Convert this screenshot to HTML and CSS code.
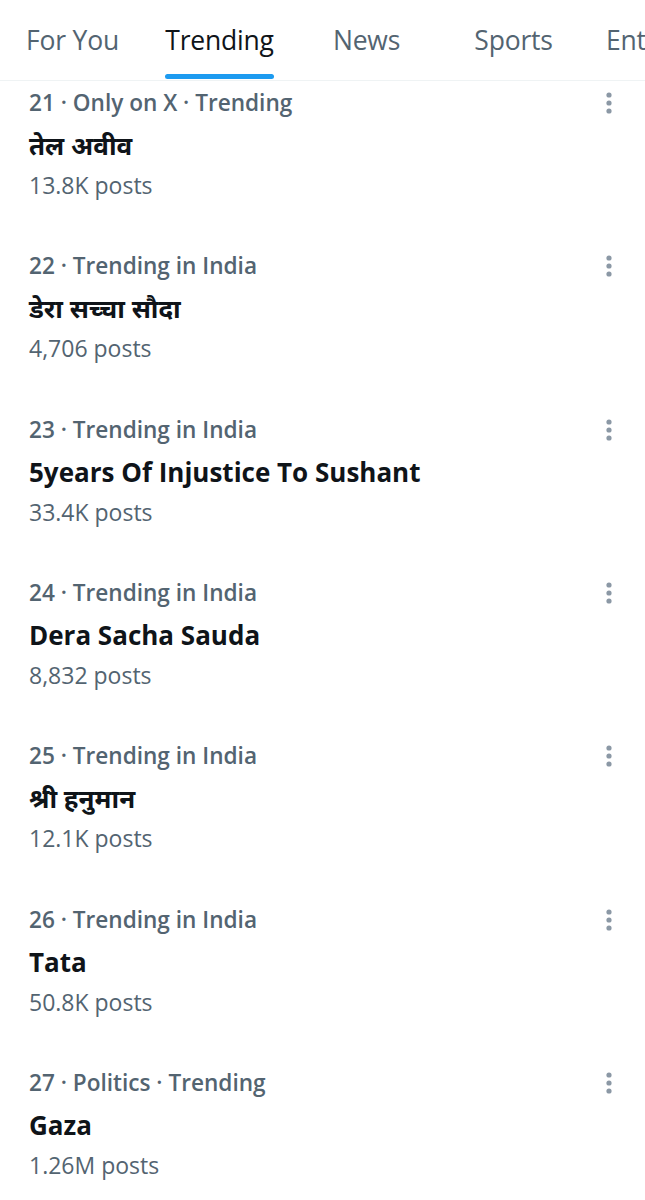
FILE: index.html
```html
<!DOCTYPE html>
<html lang="en">
<head>
<meta charset="utf-8">
<link rel="stylesheet" href="styles.css">
</head>
<body>
<nav class="tabs">
  <div class="tab light">For You</div>
  <div class="tab active"><span class="label">Trending</span></div>
  <div class="tab">News</div>
  <div class="tab">Sports</div>
  <div class="tab last">Entertainment</div>
</nav>
<main class="list">
  <section class="item">
    <div class="meta">21 · Only on X · Trending</div>
    <div class="title">तेल अवीव</div>
    <div class="count">13.8K posts</div>
    <svg class="more" width="10" height="26" viewBox="0 0 10 26"><circle cx="5" cy="5" r="2.6"/><circle cx="5" cy="13" r="2.6"/><circle cx="5" cy="21" r="2.6"/></svg>
  </section>
  <section class="item">
    <div class="meta">22 · Trending in India</div>
    <div class="title">डेरा सच्चा सौदा</div>
    <div class="count">4,706 posts</div>
    <svg class="more" width="10" height="26" viewBox="0 0 10 26"><circle cx="5" cy="5" r="2.6"/><circle cx="5" cy="13" r="2.6"/><circle cx="5" cy="21" r="2.6"/></svg>
  </section>
  <section class="item">
    <div class="meta">23 · Trending in India</div>
    <div class="title">5years Of Injustice To Sushant</div>
    <div class="count">33.4K posts</div>
    <svg class="more" width="10" height="26" viewBox="0 0 10 26"><circle cx="5" cy="5" r="2.6"/><circle cx="5" cy="13" r="2.6"/><circle cx="5" cy="21" r="2.6"/></svg>
  </section>
  <section class="item">
    <div class="meta">24 · Trending in India</div>
    <div class="title">Dera Sacha Sauda</div>
    <div class="count">8,832 posts</div>
    <svg class="more" width="10" height="26" viewBox="0 0 10 26"><circle cx="5" cy="5" r="2.6"/><circle cx="5" cy="13" r="2.6"/><circle cx="5" cy="21" r="2.6"/></svg>
  </section>
  <section class="item">
    <div class="meta">25 · Trending in India</div>
    <div class="title">श्री हनुमान</div>
    <div class="count">12.1K posts</div>
    <svg class="more" width="10" height="26" viewBox="0 0 10 26"><circle cx="5" cy="5" r="2.6"/><circle cx="5" cy="13" r="2.6"/><circle cx="5" cy="21" r="2.6"/></svg>
  </section>
  <section class="item">
    <div class="meta">26 · Trending in India</div>
    <div class="title">Tata</div>
    <div class="count">50.8K posts</div>
    <svg class="more" width="10" height="26" viewBox="0 0 10 26"><circle cx="5" cy="5" r="2.6"/><circle cx="5" cy="13" r="2.6"/><circle cx="5" cy="21" r="2.6"/></svg>
  </section>
  <section class="item">
    <div class="meta">27 · Politics · Trending</div>
    <div class="title">Gaza</div>
    <div class="count">1.26M posts</div>
    <svg class="more" width="10" height="26" viewBox="0 0 10 26"><circle cx="5" cy="5" r="2.6"/><circle cx="5" cy="13" r="2.6"/><circle cx="5" cy="21" r="2.6"/></svg>
  </section>
</main>
</body>
</html>
```
FILE: styles.css
```css
html, body {
  margin: 0;
  padding: 0;
  background: #ffffff;
}
body {
  width: 645px;
  overflow: hidden;
  font-family: "Open Sans", "Noto Sans", "Noto Sans Devanagari", sans-serif;
  color: #0f1419;
}
.tabs {
  display: grid;
  grid-template-columns: repeat(4, 147px) 1fr;
  margin-left: -1px;
  height: 80px;
  border-bottom: 1px solid #eff3f4;
  overflow: hidden;
  white-space: nowrap;
}
.tab {
  display: flex;
  justify-content: center;
  align-items: center;
  font-size: 26.5px;
  font-weight: 500;
  color: #536471;
  letter-spacing: -0.2px;
}
.tab.light {
  font-weight: 400;
}
.tab.last {
  justify-content: flex-start;
  padding-left: 19px;
}
.tab.active {
  color: #0f1419;
}
.tab.active .label {
  position: relative;
  height: 80px;
  line-height: 80px;
}
.tab.active .label::after {
  content: "";
  position: absolute;
  left: 0;
  right: 0;
  bottom: 1px;
  height: 5px;
  border-radius: 3px;
  background: #1d9bf0;
}
.list {
  padding-top: 2px;
}
.item {
  position: relative;
  padding: 0 29px 43.33px 29px;
}
.meta {
  line-height: 40px;
  font-size: 22.6px;
  font-weight: 600;
  color: #536471;
}
.title {
  line-height: 44px;
  font-size: 26px;
  font-weight: 700;
  color: #0f1419;
}
.count {
  line-height: 36px;
  font-size: 23px;
  color: #536471;
}
.more {
  position: absolute;
  right: 31px;
  top: 7px;
  fill: #8b98a5;
}
```
